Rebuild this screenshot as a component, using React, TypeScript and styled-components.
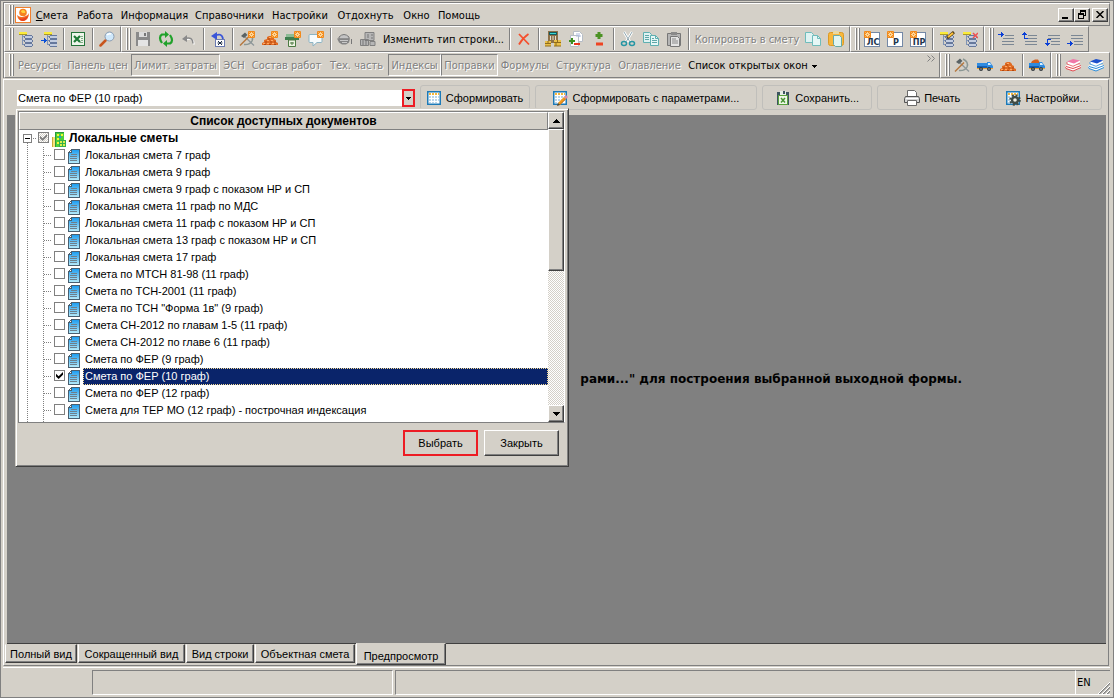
import React, { useState } from "react";
import styled, { createGlobalStyle, css } from "styled-components";

const face = "#d4d0c8";
const shade = "#808080";
const dark = "#404040";
const uiFont = '"DejaVu Sans Condensed", "DejaVu Sans", sans-serif';
const formFont = '"Liberation Sans", Arial, sans-serif';

const GlobalStyle = createGlobalStyle`
  * { box-sizing: border-box; }
  body { margin: 0; background: ${face}; color: #000; font: 11px/14px ${formFont}; }
  button, select, input { font: inherit; color: inherit; margin: 0; padding: 0; border-radius: 0; }
  button { background: none; border: 0; white-space: nowrap; }
`;

const raised = css`
  background: ${face};
  border: 1px solid;
  border-color: #fff ${dark} ${dark} #fff;
  box-shadow: inset -1px -1px ${shade};
`;

/* ---------- window and tool bars ---------- */

const Window = styled.div`
  min-height: 100vh;
  display: flex;
  flex-direction: column;
  padding: 1px 3px 2px 2px;
  border: 1px solid ${shade};
  background: ${face};
`;

const Dock = styled.header`
  border-top: 1px solid ${shade};
  border-left: 1px solid ${shade};
  font-family: ${uiFont};
`;

const Band = styled.div<{ $height: number }>`
  display: flex;
  height: ${(p) => p.$height}px;
`;

const PanelBox = styled.div<{ $grow?: boolean }>`
  display: flex;
  align-items: center;
  flex: ${(p) => (p.$grow ? "1 1 0" : "none")};
  min-width: 0;
  padding-right: 1px;
  border: 1px solid;
  border-color: #fff ${shade} ${shade} #fff;
`;

const Gripper = styled.span`
  flex: none;
  align-self: stretch;
  width: 6px;
  margin: 1px 0 1px 4px;
  background: linear-gradient(to right, #fff 1px, ${shade} 1px 2px, ${face} 2px 3px, #fff 3px 4px, ${shade} 4px 5px, ${face} 5px);
`;

const Divider = styled.span`
  flex: none;
  align-self: stretch;
  width: 6px;
  margin: 1px 0;
  background: linear-gradient(to right, transparent 2px, ${shade} 2px 3px, #fff 3px 4px, transparent 4px);
`;

const IconButton = styled.button`
  flex: none;
  display: flex;
  align-items: center;
  width: 23px;
  height: 22px;
  padding-left: 3px;
`;

const TextButton = styled.button<{ $width: number; $pressed?: boolean }>`
  flex: none;
  width: ${(p) => p.$width}px;
  height: 22px;
  padding-top: 2px;
  text-align: center;
  &:disabled { color: ${shade}; text-shadow: 1px 1px #fff; }
  ${(p) =>
    p.$pressed &&
    css`
      border: 1px solid;
      border-color: ${shade} #fff #fff ${shade};
    `}
`;

const Logo = styled.span`
  display: flex;
  width: 16px;
  height: 16px;
`;

const MenuNav = styled.nav`
  display: flex;
  flex: 1;
  padding-left: 1px;
`;

const MenuItem = styled.button<{ $width: number }>`
  width: ${(p) => p.$width}px;
  height: 20px;
  padding-top: 2px;
`;

const CaptionButtons = styled.div`
  display: flex;
`;

const CaptionButton = styled.button<{ $apart?: boolean }>`
  ${raised}
  display: flex;
  align-items: center;
  justify-content: center;
  width: 16px;
  height: 14px;
  margin-left: ${(p) => (p.$apart ? 2 : 0)}px;
`;

const Overflow = styled.button`
  align-self: flex-start;
  display: flex;
  margin-left: auto;
  padding: 2px 3px 0 0;
`;

/* ---------- form ---------- */

const Main = styled.main`
  flex: 1;
  display: flex;
  flex-direction: column;
  margin-top: 1px;
  margin-right: 1px;
  border: 1px solid;
  border-color: #fff ${shade} ${shade} #fff;
`;

const FormRow = styled.div`
  position: relative;
  z-index: 2;
  display: flex;
  gap: 5px;
  padding: 5px 6px 5px 13px;
`;

const ComboWrap = styled.div`
  position: relative;
  flex: 1 1 398px;
  height: 18px;
  margin-top: 4px;
  display: flex;
  align-items: center;
`;

const ComboField = styled.select`
  flex: 1;
  min-width: 0;
  height: 16px;
  appearance: none;
  border: 0;
  padding: 0 1px;
  background: #fff;
`;

const ComboArrow = styled.button`
  display: flex;
  align-items: center;
  justify-content: center;
  width: 13px;
  height: 18px;
  border: 2px solid #ed1c24;
`;

const ActionButton = styled.button<{ $basis: number }>`
  flex: 0 1 ${(p) => p.$basis}px;
  display: flex;
  align-items: center;
  justify-content: center;
  gap: 4px;
  height: 25px;
  border: 1px solid #c0bfbb;
  border-radius: 3px;
`;

const Workspace = styled.section`
  flex: 1;
  display: flex;
  align-items: center;
  justify-content: flex-end;
  min-height: 400px;
  margin: 0 2px 0 3px;
  padding-right: 144px;
  background: ${shade};
  border-bottom: 1px solid ${dark};
`;

const Message = styled.p`
  margin: 0;
  font: bold 12px/16px "DejaVu Sans", sans-serif;
`;

/* ---------- drop-down list ---------- */

const Popup = styled.div`
  position: absolute;
  top: calc(100% + 1px);
  left: -2px;
  width: 554px;
  padding: 2px 3px 10px 2px;
  background: ${face};
  border: 1px solid;
  border-color: ${face} ${dark} ${dark} ${face};
  box-shadow: inset 1px 1px #fff, inset -1px -1px ${shade};
`;

const ListFrame = styled.div`
  display: flex;
  border: 1px solid;
  border-color: ${shade} #fff ${shade} ${shade};
  background: #fff;
`;

const ListColumn = styled.div`
  flex: 1;
`;

const ListHeader = styled.div`
  height: 18px;
  border: 1px solid;
  border-color: #fff ${shade} ${shade} #fff;
  background: ${face};
  font: bold 12px/16px ${formFont};
  text-align: center;
`;

const dotsDown = "repeating-linear-gradient(to bottom, #808080 0 1px, transparent 1px 2px)";
const dotsAcross = "repeating-linear-gradient(to right, #808080 0 1px, transparent 1px 2px)";

const Tree = styled.ul`
  margin: 0;
  padding: 0 0 3px;
  list-style: none;
  background: ${dotsDown} 8px 13px / 1px 100% no-repeat, ${dotsDown} 24px 17px / 1px 100% no-repeat;
`;

const RootRow = styled.li`
  display: flex;
  align-items: center;
  height: 17px;
  padding-left: 4px;
  font: bold 12px/17px ${formFont};
  background: ${dotsAcross} 14px 8px / 4px 1px no-repeat;
`;

const Expander = styled.button`
  width: 9px;
  height: 9px;
  margin-right: 6px;
  border: 1px solid ${shade};
  background: linear-gradient(#000, #000) 1px 3px / 5px 1px no-repeat #fff;
`;

const Tick = styled.input`
  flex: none;
  appearance: none;
  width: 11px;
  height: 11px;
  border: 1px solid ${shade};
  background: #fff;
  &:checked::before {
    content: "";
    display: block;
    width: 7px;
    height: 7px;
    margin: 1px;
    background: #000;
    clip-path: polygon(0 25%, 38% 60%, 100% 0, 100% 38%, 38% 100%, 0 63%);
  }
  &:disabled { background: repeating-conic-gradient(#fff 0 25%, ${face} 0 50%) 0 0 / 2px 2px; }
  &:disabled::before { background: ${shade}; }
`;

const TreeLabel = styled.label`
  display: flex;
  align-items: flex-start;
  flex: 1;
  gap: 3px;
  height: 17px;
  & > input { margin-top: 2px; }
  & > svg { flex: none; margin-top: 2px; }
`;

const Leaf = styled.li`
  display: flex;
  height: 17px;
  padding-left: 35px;
  background: ${dotsAcross} 25px 8px / 8px 1px no-repeat;
`;

const LeafText = styled.span<{ $selected: boolean }>`
  flex: 1;
  height: 17px;
  padding-left: 1px;
  line-height: 15px;
  border: 1px solid transparent;
  ${(p) =>
    p.$selected &&
    css`
      background: #0a246a;
      color: #fff;
      border: 1px dotted #f5db95;
    `}
`;

const ScrollBar = styled.div`
  display: flex;
  flex-direction: column;
  width: 16px;
  background: repeating-conic-gradient(#fff 0 25%, ${face} 0 50%) 0 0 / 2px 2px;
`;

const ScrollButton = styled.button`
  ${raised}
  display: flex;
  align-items: center;
  justify-content: center;
  height: 17px;
`;

const ScrollThumb = styled.div`
  ${raised}
  height: 142px;
  margin-bottom: auto;
`;

const PopupActions = styled.div`
  display: flex;
  justify-content: flex-end;
  gap: 6px;
  padding: 7px 6px 0 0;
`;

const PopupButton = styled.button<{ $marked?: boolean }>`
  ${raised}
  width: 75px;
  height: 26px;
  ${(p) =>
    p.$marked &&
    css`
      border: 2px solid #ed1c24;
      box-shadow: none;
    `}
`;

/* ---------- tabs and status bar ---------- */

const Tabs = styled.div`
  display: flex;
  align-items: flex-start;
  gap: 1px;
  height: 21px;
  padding-left: 1px;
`;

const Tab = styled.button<{ $width: number; $active?: boolean }>`
  ${raised}
  width: ${(p) => p.$width}px;
  height: ${(p) => (p.$active ? 22 : 19)}px;
  margin-top: ${(p) => (p.$active ? -1 : 0)}px;
  padding-top: ${(p) => (p.$active ? 3 : 0)}px;
  border-top-color: ${face};
`;

const StatusBar = styled.footer`
  display: flex;
  align-items: stretch;
  gap: 2px;
  height: 28px;
  margin-top: 1px;
  padding: 2px 0 0 89px;
  border-top: 1px solid #fff;
  font-family: ${uiFont};
`;

const StatusCell = styled.div<{ $width?: number }>`
  flex: ${(p) => (p.$width ? `0 0 ${p.$width}px` : "1")};
  border: 1px solid;
  border-color: ${shade} #fff #fff ${shade};
`;

const Language = styled.div`
  display: flex;
  align-items: center;
  justify-content: space-between;
  width: 34px;
  margin-left: -2px;
  padding-left: 1px;
  border-top: 1px solid ${shade};
  border-bottom: 1px solid #fff;
`;

const SizeGrip = styled.svg`
  align-self: flex-end;
  flex: none;
`;

/* ---------- icons ---------- */

const Svg = ({ children, crisp, w = 16, h = 16 }: { children: React.ReactNode; crisp?: boolean; w?: number; h?: number }) => (
  <svg width={w} height={h} viewBox={`0 0 ${w} ${h}`} fill="none" shapeRendering={crisp ? "crispEdges" : undefined} aria-hidden="true">
    {children}
  </svg>
);

const Branches = () => (
  <>
    <path d="M1 1h8v2H1z" fill="#fbec3a" />
    <path d="M1 3h8v1H1z" fill="#a8982c" />
    <path d="M4 4h1v10H4zM5 5h2v1H5zM5 9h2v1H5zM5 13h2v1H5z" fill="#7f93b5" />
    <path d="M7 5h7v2H7zM7 9h7v2H7zM7 13h7v2H7z" fill="#c3cde0" />
    <path d="M7 4h7v1H7zM7 7h7v1H7zM6 5h1v2H6zM14 5h1v2h-1zM7 8h7v1H7zM7 11h7v1H7zM6 9h1v2H6zM14 9h1v2h-1zM7 12h7v1H7zM7 15h7v1H7zM6 13h1v2H6zM14 13h1v2h-1z" fill="#66789c" />
  </>
);

const Spark = ({ x = 9, y = 0 }: { x?: number; y?: number }) => (
  <g transform={`translate(${x} ${y})`}>
    <rect width="7" height="7" rx="1" fill="#f28a1c" />
    <path d="M3.500 1v5M1 3.500h5M1.500 1.500l4 4M5.500 1.500l-4 4" stroke="#ffe9b8" strokeWidth=".8" />
    <rect x="3" y="3" width="1" height="1" fill="#f28a1c" />
  </g>
);

const Hammer = () => (
  <>
    <path d="M9 2q6 3 4 8-2 4-8 3.500" stroke="#8b9794" strokeWidth="1.500" />
    <path d="M5 5l10 9.500" stroke="#8e969a" strokeWidth="1.300" />
    <path d="M1 14.500L10 5.500" stroke="#b5773d" strokeWidth="1.500" />
    <path d="M2 5l4-3.500L8.500 4 5 7z" fill="#596264" />
  </>
);

const Bricks = () => (
  <>
    <path d="M0 14v-2l2-1V9l3-1V6l2-1h3l2 2v1l2 1v2l2 1v2z" fill="#e06c24" />
    <path d="M3 11h2M8 11h2M12 11h2M6 8h2M2 13.500h2M7 13.500h2M12 13.500h2" stroke="#b2460f" />
    <path d="M7 6.500h2M5 9.500h2M9 9.500h2M1 12.500h2M5 12.500h2M10 12.500h2" stroke="#ffa866" />
  </>
);

const Truck = ({ loaded }: { loaded?: boolean }) => (
  <>
    {loaded && <path d="M2 6l1-2 3-1.500h3L11 6z" fill="#d2601f" />}
    <path d="M0 6h10v5H0z" fill="#2f8be0" />
    <path d="M0 9h10v2H0z" fill="#1560b4" />
    <path d="M10 5h3l2 3 1 1v2h-6z" fill="#2f8be0" />
    <path d="M11 6h2l1 2h-3z" fill="#d6efff" />
    <path d="M0 11h16v1H0z" fill="#f2a12a" />
    <circle cx="4" cy="12" r="2" fill="#30373b" />
    <circle cx="12" cy="12" r="2" fill="#30373b" />
    <circle cx="4" cy="12" r=".7" fill="#c4c9cb" />
    <circle cx="12" cy="12" r=".7" fill="#c4c9cb" />
  </>
);

const Books = ({ top, mid }: { top: string; mid: string }) => (
  <>
    <path d="M0 9l5-2 11 1v2.500L8 14 0 11z" fill="#fff" />
    <path d="M1 9.500q-1 1 0 2L8 14l8-3.500M1 9.500L8 11.500l8-3" stroke={mid} />
    <path d="M2 5v2l6 2 7-3V4z" fill="#fff" />
    <path d="M2 4.500L8 2l7 1.500L9 6.500z" fill={top} />
    <path d="M2 5v2l6 2.300L15 6" stroke={mid} strokeWidth=".8" />
  </>
);

const Pages = ({ tint }: { tint: string }) => (
  <>
    <path d="M.5 1.500h6l2 2v8h-8z" fill="#dff2f2" stroke={tint} />
    <path d="M7.500 4.500h5l3 3v7h-8z" fill="#e6f7f6" stroke={tint} />
    <path d="M12.500 4.500v3h3" stroke={tint} />
  </>
);

const DocNew = ({ label }: { label: string }) => (
  <Svg>
    <rect x=".5" y="1.500" width="15" height="14" fill="#fff" stroke="#7488a6" />
    <text x="9" y="14" fontSize="9" fontWeight="bold" fontFamily='"DejaVu Sans Condensed", sans-serif' fill="#23364d" textAnchor="middle">{label}</text>
    <Spark x={0} y={0} />
  </Svg>
);

const Calendar = () => (
  <>
    <rect x="1.750" y="1.750" width="12.500" height="12.500" fill="#fff" stroke="#1c7ab8" strokeWidth="1.500" />
    <path d="M3 3h2v2H3zM6 3h2v2H6zM9 3h2v2H9zM12 3h1v2h-1z" fill="#f5b63a" />
    <path d="M3 6h2v2H3zM6 6h2v2H6zM9 6h2v2H9zM12 6h1v2h-1zM3 9h2v2H3zM6 9h2v2H6zM9 9h2v2H9zM12 9h1v2h-1zM3 12h2v1H3zM6 12h2v1H6zM9 12h2v1H9z" fill="#b9d5ea" />
  </>
);

const Lines = ({ y, arrow }: { y: number; arrow: "right" | "up" | "down" }) => (
  <Svg crisp>
    <path d={arrow === "down" ? "M4 4h12v1H4zM4 7h12v1H4zM7 10h9v1H7zM7 13h9v1H7z" : y > 5 ? "M4 4h12v1H4zM4 7h12v1H4zM7 10h9v1H7zM7 13h9v1H7z" : "M7 4h9v1H7zM5 7h11v1H5zM4 10h12v1H4zM4 13h12v1H4z"} fill="#7b8794" />
    <g transform={`translate(0 ${y})`} fill="#0a3fd6">
      {arrow === "right" && <path d="M0 2h3V0h1v1h1v1h1v1H5v1H4v1H3V3H0z" />}
      {arrow === "up" && <path d="M3 0h1v1h1v1h1v1H4v3h3v1H3V3H1V2h1V1h1z" />}
      {arrow === "down" && <path d="M3 0h4v1H4v3h2v1H5v1H4v1H3V6H2V5H1V4h2z" />}
    </g>
  </Svg>
);

const icons: Record<string, React.ReactNode> = {
  tree: <Svg crisp><Branches /></Svg>,
  treeInto: (
    <Svg crisp>
      <g transform="translate(2 0)"><path d="M-1 0" /><Branches /></g>
      <path d="M0 9h3V7h1v1h1v1h1v1H5v1H4v1H3v-2H0z" fill="#0a50d8" />
    </Svg>
  ),
  excel: (
    <Svg>
      <rect x="1.500" y="1.500" width="13" height="13" fill="#eef5ea" stroke="#25733a" />
      <path d="M4 5l6 6M10 5l-6 6" stroke="#1f7a36" strokeWidth="2.200" />
      <path d="M10 5.500h3M11 7.500h2M11 9.500h2M10 11.500h3" stroke="#7fae86" />
    </Svg>
  ),
  search: (
    <Svg>
      <path d="M1.500 14.500l5-5" stroke="#c8551c" strokeWidth="2.500" strokeLinecap="round" />
      <circle cx="10.500" cy="5.500" r="4.500" fill="#cfe8fb" stroke="#8b9cb0" />
      <path d="M8 4q2-2 4-1" stroke="#fff" strokeWidth="1.500" />
    </Svg>
  ),
  save: (
    <Svg crisp>
      <path d="M1 1h13l1 1v13H1z" fill="#8a8a8a" />
      <path d="M4 1h8v5H4z" fill="#dcdcdc" /><path d="M9 2h2v3H9z" fill="#777" />
      <path d="M3 9h10v6H3z" fill="#e4e4e4" />
    </Svg>
  ),
  refresh: (
    <Svg>
      <path d="M4 12Q0 6 4 3.500h4M12 4q4 6 0 8.500H8" stroke="#21a12b" strokeWidth="2.200" />
      <path d="M7 0l4 3.500L7 7zM9 9v7l-4-3.500z" fill="#21a12b" />
    </Svg>
  ),
  undo: (
    <Svg>
      <path d="M4 7.500q8-2 8 5" stroke="#fff" strokeWidth="1.500" transform="translate(1 1)" />
      <path d="M4 7.500q8-2 8 5" stroke="#8a8a8a" strokeWidth="1.500" />
      <path d="M1 8l5-4v7z" fill="#8a8a8a" />
    </Svg>
  ),
  undoBox: (
    <Svg>
      <path d="M4 5q8-4 9 3" stroke="#3a55d8" strokeWidth="1.800" />
      <path d="M1 5l6-4v8z" fill="#3a55d8" />
      <rect x="5.500" y="8.500" width="9" height="7" fill="#fff" stroke="#6a7ab0" />
      <path d="M8 10l4 4M12 10l-4 4M7.500 12h5" stroke="#20304d" />
    </Svg>
  ),
  hammerNew: <Svg><Hammer /><Spark /></Svg>,
  bricksNew: <Svg><Bricks /><Spark /></Svg>,
  shopNew: (
    <Svg>
      <path d="M1 3h12v4H1z" fill="#8dbb95" /><path d="M0 6h14v3H0z" fill="#3f7f4f" />
      <path d="M3.500 9h7v6.500h-7z" fill="#eef3e2" stroke="#4c7a42" /><path d="M5 12h4M7 11v3" stroke="#4c7a42" /><Spark />
    </Svg>
  ),
  bubbleNew: (
    <Svg>
      <path d="M2 3.500h11q1 0 1 1v6q0 1-1 1H9L5 15v-3.500H2q-1 0-1-1v-6q0-1 1-1z" fill="#f6fbfc" stroke="#8cb4c4" /><Spark />
    </Svg>
  ),
  mixer: (
    <Svg>
      <path d="M2 6q5-5 10 0v2H2z" fill="#c4c4c4" stroke="#777" />
      <path d="M0 7.500h13l-1 4-3 2H5l-3-2z" fill="#858585" /><path d="M3 9.500h8M5 11.500h5" stroke="#c8c8c8" /><path d="M14.500 8v5" stroke="#777" />
    </Svg>
  ),
  blocks: (
    <Svg>
      <path d="M5 1.500h9v8H5zM.5 8.500h8v6h-8zM10 10.500h5v4h-5z" fill="#b6b6b6" stroke="#808080" />
      <path d="M7 4h2M11 4h2M7 6h2M11 7h2M3 9v5M6 9v5" stroke="#777" />
    </Svg>
  ),
  remove: <Svg><path d="M3 3l10 10.500M12.500 3q-6 4-9.500 10.500" stroke="#f4502e" strokeWidth="1.800" /></Svg>,
  calc: (
    <Svg>
      <path d="M3 0h10v12H3z" fill="#8c7048" /><path d="M4 1h8v3H4z" fill="#17595e" /><path d="M5 2h6v1H5z" fill="#39d6d0" />
      <path d="M5 6h1M7.500 6h1M10 6h1M5 8h1M7.500 8h1M10 8h1" stroke="#fff" strokeWidth="1.500" />
      <path d="M0 10h6v5H0zM9 9h7v6H9z" fill="#e9bf49" /><path d="M0 12.500h6M3 10v2M9 11.500h7M12.500 9v2.500M11 12v3M0 15h6M9 15h7" stroke="#8f6c1c" />
    </Svg>
  ),
  addPage: (
    <Svg>
      <path d="M5.500.5h6l3 3v7h-9z" fill="#fff" stroke="#b6bdc6" /><path d="M2.500 4.500h8v11h-8z" fill="#fafafa" stroke="#b6bdc6" /><path d="M8 3h2M8 5h5M11 2v4" stroke="#aebde0" />
      <path d="M4 7v6M1 10h6" stroke="#3b8f1e" strokeWidth="2" /><path d="M6 13h6" stroke="#e8351e" strokeWidth="2" />
    </Svg>
  ),
  plusMinus: <Svg><path d="M8 1v7M4.500 4.500h7" stroke="#4c9224" strokeWidth="3" /><path d="M5 13h7" stroke="#ef4423" strokeWidth="3" /></Svg>,
  cut: (
    <Svg>
      <path d="M4 1l6 10M12 1L6 11" stroke="#fff" strokeWidth="2.500" />
      <path d="M4 1l6 10M12 1L6 11" stroke="#93a9b2" />
      <ellipse cx="4" cy="12.500" rx="2.500" ry="2" stroke="#2696a4" strokeWidth="1.500" /><ellipse cx="12" cy="12.500" rx="2.500" ry="2" stroke="#2696a4" strokeWidth="1.500" />
    </Svg>
  ),
  copy: <Svg><Pages tint="#5eafb0" /><path d="M2 4.500h4M2 6.500h4M2 8.500h4M9 7.500h2M9 9.500h5M9 11.500h5" stroke="#5fa6a8" /></Svg>,
  paste: (
    <Svg>
      <path d="M1.500 2.500h13v12h-13z" fill="#b5b5b5" stroke="#777" /><path d="M5 1h6v3H5z" fill="#8a8a8a" />
      <path d="M4.500 5.500h7l2 2v8h-9z" fill="#e4e4e4" stroke="#777" /><path d="M6 8h4M6 10h6M6 12h6" stroke="#888" />
    </Svg>
  ),
  pages: <Svg><Pages tint="#6fbcbb" /></Svg>,
  pasteGold: (
    <Svg>
      <rect x=".5" y="1.500" width="15" height="13" rx="2" fill="#f8b73c" stroke="#dc9a25" /><path d="M5 0h6v3H5z" fill="#e8d9a4" />
      <path d="M5.500 4.500h6l2 2v9h-6l-2-2z" fill="#e1f5f2" stroke="#67aaa8" />
    </Svg>
  ),
  ls: <DocNew label="ЛС" />,
  r: <DocNew label="Р" />,
  pr: <DocNew label="ПР" />,
  treeEdit: <Svg><Branches /><path d="M8 7l7-6" stroke="#564118" strokeWidth="3" /><path d="M9 6l5-4" stroke="#ffc33a" strokeWidth="2" /></Svg>,
  treeDel: <Svg><Branches /><path d="M11 2l5 5M16 2l-5 5" stroke="#ef5252" strokeWidth="1.500" /></Svg>,
  in1: <Lines y={1} arrow="right" />,
  in2: <Lines y={1} arrow="up" />,
  in3: <Lines y={8} arrow="down" />,
  in4: <Lines y={10} arrow="right" />,
  hammer: <Svg><Hammer /></Svg>,
  truck: <Svg><Truck /></Svg>,
  bricks: <Svg><Bricks /></Svg>,
  truckFull: <Svg><Truck loaded /></Svg>,
  bookRed: <Svg><Books top="#f078a8" mid="#e14a50" /></Svg>,
  bookBlue: <Svg><Books top="#1c50cc" mid="#2b8bd8" /></Svg>,
  calendar: <Svg><Calendar /></Svg>,
  calendarEdit: (
    <Svg><Calendar /><path d="M7 14l6-6" stroke="#f29b1c" strokeWidth="3" /><path d="M8 14.500l6-6" stroke="#b8651a" strokeWidth=".8" /><path d="M13 8l2-2" stroke="#d788ab" strokeWidth="3" /><path d="M5 16l1-3 2 2z" fill="#5a4423" /></Svg>
  ),
  saveXls: (
    <Svg>
      <path d="M2 2h12v13H2z" fill="#3d5560" /><path d="M5 1h6v4H5z" fill="#e5eee5" /><path d="M8 1h2v3H8z" fill="#3d5560" />
      <path d="M3.500 5.500h9v9h-9z" fill="#eef7e7" stroke="#58a23d" /><path d="M6 8l4 4.500M10 8l-4 4.500" stroke="#479333" strokeWidth="1.500" />
    </Svg>
  ),
  print: (
    <Svg>
      <path d="M3.500 6V.5h7l2 2V6" fill="#fff" stroke="#6a6a6a" />
      <path d="M1.500 6.500h13l1 2v4H.5v-4z" fill="#d4d4d4" stroke="#555" />
      <path d="M3.500 10.500h9v5h-9z" fill="#fff" stroke="#6a6a6a" /><path d="M2 8.500h12" stroke="#fff" />
    </Svg>
  ),
  settings: (
    <Svg>
      <Calendar />
      <circle cx="10" cy="10" r="4.800" stroke="#3f4c46" strokeWidth="2" strokeDasharray="2 1.770" />
      <circle cx="10" cy="10" r="3" stroke="#3f4c46" strokeWidth="2.400" fill="#f0efe4" />
    </Svg>
  ),
  building: (
    <Svg w={14} h={15} crisp>
      <path d="M0 5h4v10H0z" fill="#f7e27e" /><path d="M0 5h1v10H0z" fill="#c8aa3a" />
      <path d="M3 0h9v15H3z" fill="#4bd13b" /><path d="M3 0h9v1H3zM3 0h1v15H3z" fill="#2b9a3a" />
      <path d="M5 2h2v2H5zM9 2h2v2H9zM5 6h2v2H5zM5 10h2v2H5z" fill="#f2f53a" />
      <path d="M7 4h2v2H7zM7 8h1v2H7z" fill="#2f8be0" />
      <path d="M7 8h7v7H7z" fill="#35b04a" /><path d="M8 9h2v2H8zM11 9h2v2h-2zM8 12h2v2H8zM11 12h2v2h-2z" fill="#d9f048" />
    </Svg>
  ),
  document: (
    <Svg w={12} h={15} crisp>
      <defs>
        <linearGradient id="sheet" x1="0" y1="0" x2="0" y2="1">
          <stop offset="0" stopColor="#1e9df0" /><stop offset="1" stopColor="#b4eafa" />
        </linearGradient>
      </defs>
      <path d="M3 0h9v15H0V3z" fill="#4a5f70" />
      <path d="M3 1h8v13H1V3z" fill="url(#sheet)" />
      <path d="M0 0h3v3H0z" fill="#fff" /><path d="M0 3h3V0h1v3L3 4H0zM2 1h1v1H2zM1 2h1v1H1z" fill="#4a5f70" />
      <path d="M3 5h6v1H3zM2 7h7v1H2zM2 9h7v1H2zM2 11h7v1H2z" fill="#6d7f8c" />
    </Svg>
  ),
};

/* ---------- data ---------- */

const menu: [string, number][] = [
  ["Смета", 40], ["Работа", 46], ["Информация", 73], ["Справочники", 77],
  ["Настройки", 64], ["Отдохнуть", 67], ["Окно", 35], ["Помощь", 50],
];

type Item = string | { text: string; width: number; disabled?: boolean; pressed?: boolean; arrow?: boolean };

const topPanels: Item[][] = [
  ["tree", "treeInto", "|", "excel", "|", "search"],
  [
    "save", "refresh", "undo", "|", "undoBox", "|", "hammerNew", "bricksNew", "shopNew", "bubbleNew", "|",
    "mixer", "blocks", { text: "Изменить тип строки...", width: 127 }, "|", "remove", "|",
    "calc", "addPage", "plusMinus", "|", "cut", "copy", "paste", "|",
    { text: "Копировать в смету", width: 110, disabled: true }, "pages", "pasteGold",
  ],
  ["ls", "r", "pr", "|", "treeEdit", "treeDel"],
  ["in1", "in2", "in3", "in4"],
];

const viewItems: Item[] = [
  { text: "Ресурсы", width: 49, disabled: true },
  { text: "Панель цен", width: 67, disabled: true },
  { text: "Лимит. затраты", width: 89, disabled: true, pressed: true },
  { text: "ЭСН", width: 28, disabled: true },
  { text: "Состав работ", width: 77, disabled: true },
  { text: "Тех. часть", width: 63, disabled: true },
  { text: "Индексы", width: 53, disabled: true, pressed: true },
  { text: "Поправки", width: 57, disabled: true, pressed: true },
  { text: "Формулы", width: 54, disabled: true },
  { text: "Структура", width: 63, disabled: true },
  { text: "Оглавление", width: 69, disabled: true },
  { text: "Список открытых окон", width: 137, arrow: true },
];

const sidePanels: Item[][] = [
  ["hammer", "truck", "bricks", "|", "truckFull"],
  ["bookRed", "bookBlue"],
];

const actions = [
  { icon: "calendar", text: "Сформировать", width: 110 },
  { icon: "calendarEdit", text: "Сформировать с параметрами...", width: 223 },
  { icon: "saveXls", text: "Сохранить...", width: 110 },
  { icon: "print", text: "Печать", width: 110 },
  { icon: "settings", text: "Настройки...", width: 110 },
];

const documents = [
  "Локальная смета 7 граф",
  "Локальная смета 9 граф",
  "Локальная смета 9 граф с показом НР и СП",
  "Локальная смета 11 граф по МДС",
  "Локальная смета 11 граф с показом НР и СП",
  "Локальная смета 13 граф с показом НР и СП",
  "Локальная смета 17 граф",
  "Смета по МТСН 81-98 (11 граф)",
  "Смета по ТСН-2001 (11 граф)",
  'Смета по ТСН "Форма 1в" (9 граф)',
  "Смета СН-2012 по главам 1-5 (11 граф)",
  "Смета СН-2012 по главе 6 (11 граф)",
  "Смета по ФЕР (9 граф)",
  "Смета по ФЕР (10 граф)",
  "Смета по ФЕР (12 граф)",
  "Смета для ТЕР МО (12 граф) - построчная индексация",
];

const tabs: [string, number][] = [
  ["Полный вид", 72], ["Сокращенный вид", 107], ["Вид строки", 68], ["Объектная смета", 100], ["Предпросмотр", 90],
];

/* ---------- pieces ---------- */

const Triangle = ({ up }: { up?: boolean }) => (
  <Svg w={7} h={4} crisp>
    <path d={up ? "M3 0h1v1h1v1h1v1h1v1H0V3h1V2h1V1h1z" : "M0 0h7v1H6v1H5v1H4v1H3V3H2V2H1V1H0z"} fill="#000" />
  </Svg>
);

const SmallTriangle = () => <Svg w={5} h={3} crisp><path d="M0 0h5v1H4v1H3v1H2V2H1V1H0z" fill="#000" /></Svg>;

const MenuArrow = styled.span`
  display: inline-flex;
  margin-left: 4px;
  vertical-align: middle;
`;

const Panel = ({ items, grow, children }: { items: Item[]; grow?: boolean; children?: React.ReactNode }) => (
  <PanelBox $grow={grow} role="toolbar">
    <Gripper />
    {items.map((item, i) =>
      item === "|" ? (
        <Divider key={i} />
      ) : typeof item === "string" ? (
        <IconButton key={i} type="button">{icons[item]}</IconButton>
      ) : (
        <TextButton key={i} type="button" $width={item.width} $pressed={item.pressed} disabled={item.disabled}>
          {item.text}
          {item.arrow && <MenuArrow><SmallTriangle /></MenuArrow>}
        </TextButton>
      )
    )}
    {children}
  </PanelBox>
);

export default function App() {
  const [open, setOpen] = useState(true);
  const [selected, setSelected] = useState("Смета по ФЕР (10 граф)");

  return (
    <>
      <GlobalStyle />
      <Window>
        <Dock>
          <Band $height={23}>
            <PanelBox $grow>
              <Gripper />
              <Logo>
                <Svg>
                  <rect x=".5" y=".5" width="15" height="15" fill="#fff" stroke="#f07f2e" />
                  <circle cx="8" cy="5.500" r="3.800" fill="#f58220" />
                  <path d="M6 4q2-2 4 0 1 2-1 2-3 0-3-2z" fill="#ffd23c" />
                  <path d="M2 8q3 3 7 1.500 4-1 5-3.500 0 7-6 8-5 0-6-6z" fill="#f26a21" />
                  <path d="M4 11q4 2 9-2-2 5-5 5-3 0-4-3z" fill="#e8401f" />
                </Svg>
              </Logo>
              <MenuNav>
                {menu.map(([name, width], i) => (
                  <MenuItem key={name} type="button" $width={width}>
                    {i === 0 ? <><u>С</u>мета</> : name}
                  </MenuItem>
                ))}
              </MenuNav>
              <CaptionButtons>
                <CaptionButton type="button" aria-label="Свернуть"><Svg w={10} h={8} crisp><path d="M1 6h6v2H1z" fill="#000" /></Svg></CaptionButton>
                <CaptionButton type="button" aria-label="Восстановить">
                  <Svg w={10} h={9} crisp><path d="M3 0h6v6H7V5h1V2H4v1H3zM1 3h6v6H1zM2 5v3h4V5z" fill="#000" fillRule="evenodd" /></Svg>
                </CaptionButton>
                <CaptionButton type="button" $apart aria-label="Закрыть окно"><Svg w={8} h={7}><path d="M.5 0l7 7M7.500 0l-7 7" stroke="#000" strokeWidth="1.500" /></Svg></CaptionButton>
              </CaptionButtons>
            </PanelBox>
          </Band>
          <Band $height={26}>
            {topPanels.map((items, i) => <Panel key={i} items={items} />)}
          </Band>
          <Band $height={26}>
            <Panel items={viewItems} grow>
              <Overflow type="button" aria-label="Другие кнопки">
                <Svg w={8} h={7}><path d="M.5.5l3 3-3 3M4.500.5l3 3-3 3" stroke="#808080" /></Svg>
              </Overflow>
            </Panel>
            {sidePanels.map((items, i) => <Panel key={i} items={items} />)}
          </Band>
        </Dock>

        <Main>
          <FormRow>
            <ComboWrap>
              <ComboField aria-label="Документ" value={selected} onChange={(e) => setSelected(e.target.value)}>
                {documents.map((name) => <option key={name}>{name}</option>)}
              </ComboField>
              <ComboArrow type="button" aria-label="Открыть список" aria-expanded={open} onClick={() => setOpen(!open)}>
                <SmallTriangle />
              </ComboArrow>
              {open && (
                <Popup>
                  <ListFrame>
                    <ListColumn>
                      <ListHeader>Список доступных документов</ListHeader>
                      <Tree>
                        <RootRow>
                          <Expander type="button" aria-label="Свернуть ветвь" />
                          <TreeLabel>
                            <Tick type="checkbox" defaultChecked disabled />
                            {icons.building}
                            <span>Локальные сметы</span>
                          </TreeLabel>
                        </RootRow>
                        {documents.map((name) => (
                          <Leaf key={name}>
                            <TreeLabel>
                              <Tick type="checkbox" checked={name === selected} onChange={() => setSelected(name)} />
                              {icons.document}
                              <LeafText $selected={name === selected}>{name}</LeafText>
                            </TreeLabel>
                          </Leaf>
                        ))}
                      </Tree>
                    </ListColumn>
                    <ScrollBar>
                      <ScrollButton type="button" aria-label="Вверх"><Triangle up /></ScrollButton>
                      <ScrollThumb />
                      <ScrollButton type="button" aria-label="Вниз"><Triangle /></ScrollButton>
                    </ScrollBar>
                  </ListFrame>
                  <PopupActions>
                    <PopupButton type="button" $marked onClick={() => setOpen(false)}>Выбрать</PopupButton>
                    <PopupButton type="button" onClick={() => setOpen(false)}>Закрыть</PopupButton>
                  </PopupActions>
                </Popup>
              )}
            </ComboWrap>
            {actions.map((a) => (
              <ActionButton key={a.text} type="button" $basis={a.width}>
                {icons[a.icon]}
                {a.text}
              </ActionButton>
            ))}
          </FormRow>
          <Workspace>
            <Message>рами..." для построения выбранной выходной формы.</Message>
          </Workspace>
          <Tabs>
            {tabs.map(([name, width]) => (
              <Tab key={name} type="button" $width={width} $active={name === "Предпросмотр"}>{name}</Tab>
            ))}
          </Tabs>
        </Main>

        <StatusBar>
          <StatusCell $width={301} />
          <StatusCell />
          <Language>
            EN
            <SizeGrip width="12" height="12" viewBox="0 0 12 12" aria-hidden="true">
              <path d="M1 12L12 1M5 12l7-7M9 12l3-3" stroke="#808080" strokeWidth="1.500" />
              <path d="M0 12L12 0M4 12l8-8M8 12l4-4" stroke="#fff" />
            </SizeGrip>
          </Language>
        </StatusBar>
      </Window>
    </>
  );
}
